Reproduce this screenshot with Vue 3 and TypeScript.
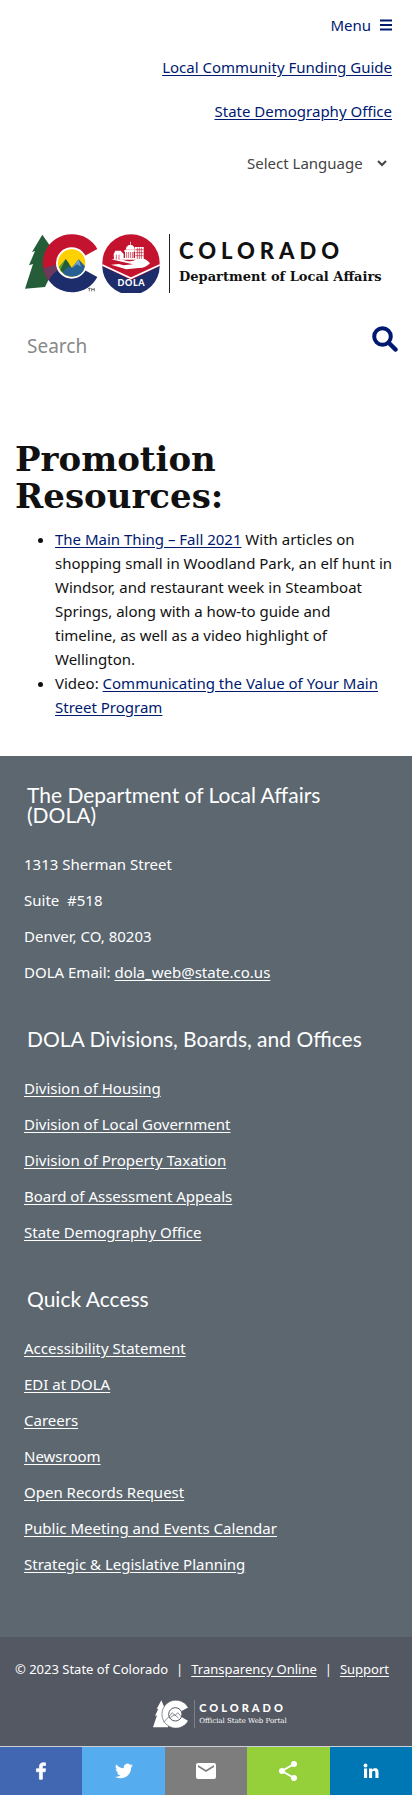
<script setup lang="ts">
interface LinkGroup {
  title: string
  links: string[]
}

const topLinks: string[] = ['Local Community Funding Guide', 'State Demography Office']

const groups: LinkGroup[] = [
  {
    title: 'DOLA Divisions, Boards, and Offices',
    links: [
      'Division of Housing',
      'Division of Local Government',
      'Division of Property Taxation',
      'Board of Assessment Appeals',
      'State Demography Office',
    ],
  },
  {
    title: 'Quick Access',
    links: [
      'Accessibility Statement',
      'EDI at DOLA',
      'Careers',
      'Newsroom',
      'Open Records Request',
      'Public Meeting and Events Calendar',
      'Strategic & Legislative Planning',
    ],
  },
]
</script>

<template>
  <div class="page">
    <header class="header">
      <button class="menu" type="button">
        Menu
        <svg width="12" height="12" viewBox="0 0 12 12" aria-hidden="true">
          <path d="M0 1.5h12M0 6h12M0 10.5h12" stroke="currentColor" stroke-width="2" />
        </svg>
      </button>
      <a v-for="link in topLinks" :key="link" class="top-link" href="#">{{ link }}</a>
      <div class="language">
        <select aria-label="Select Language">
          <option>Select Language</option>
        </select>
        <svg width="10" height="7" viewBox="0 0 10 7" aria-hidden="true">
          <path d="M1 1l4 4 4-4" fill="none" stroke="currentColor" stroke-width="2" />
        </svg>
      </div>
    </header>

    <a class="logo" href="#" aria-label="Colorado Department of Local Affairs">
      <svg class="logo-state" width="76" height="60" viewBox="42 40 228 180" aria-hidden="true">
        <path fill="#245d38" d="M97 45L66 97l9-3-18 43 12-4-24 74 60-5 30-62-14-60z" />
        <path fill="#c3132f" d="M185 44a86 86 0 0 0-69 138l69-52 77-42a86 86 0 0 0-77-44z" />
        <path fill="#6d3a5d" d="M116 182l69-52-44 4-40 12q3 20 15 36z" />
        <path fill="#1d2c6b" d="M116 182a86 86 0 0 0 146-10l-77-42q-50 16-69 52z" />
        <circle cx="185" cy="130" r="47" fill="#fff" />
        <circle cx="185" cy="130" r="41" fill="#ffd100" />
        <path fill="#6b9e35" d="M146 142l21-24 11 14-24 25z" />
        <path fill="#245d38" d="M151 151l16-33 25 36-25 13z" />
        <path fill="#276092" d="M157 158l20-19 7 7 22-27 19 21q-6 31-40 31-20-1-28-13z" />
        <path fill="#6fa0c8" d="M184 147l22-28 7 22-12-7z" />
        <path d="M234 206h8m-4 0v9m7 0v-9l4 5 4-5v9" fill="none" stroke="#333" stroke-width="2" />
      </svg>
      <svg class="logo-dola" width="58" height="60" viewBox="278 40 174 180">
        <circle cx="365" cy="130" r="86" fill="#c3132f" />
        <path fill="#1d2c6b" d="M279 139l86 42 86-42a86 86 0 0 1-172 0z" />
        <path d="M279 136l86 40 86-40" fill="none" stroke="#fff" stroke-width="5" />
        <g fill="#fff">
          <path d="M358 76h4V66h2v10h4q9 5 9 14h-28q0-9 9-14zM345 91h31v5h-3v19h4v5h-34v-5h4V96h-2zM377 82h26v38h-26zM313 103l5-10h16l9 10v17h-29z" />
          <path d="M305 119q28-4 45 4 18 6 32-5l14-2q12 0 26 15-14 15-34 14l-38 4q-23-8-45-14l24-2 14 4 28-3-34-8z" />
        </g>
        <path d="M352 97v18m6-18v18m6-18v18m6-18v18M384 84v34m6-34v34m6-34v34M378 90h24m-24 9h24m-24 9h24M321 105v15m8-15v15" stroke="#c3132f" stroke-width="2" />
        <text x="366" y="199" text-anchor="middle" class="dola-text">DOLA</text>
      </svg>
      <span class="wordmark">
        <span class="state-name">COLORADO</span>
        <span class="department">Department of Local Affairs</span>
      </span>
    </a>

    <form class="search" @submit.prevent>
      <input type="search" placeholder="Search" aria-label="Search" />
      <button type="submit" aria-label="Submit search">
        <svg width="26" height="26" viewBox="0 0 26 26" aria-hidden="true">
          <circle cx="10.5" cy="10.5" r="8.3" fill="none" stroke="currentColor" stroke-width="4" />
          <path d="M17 17l6.5 6.5" stroke="currentColor" stroke-width="4.5" stroke-linecap="round" />
        </svg>
      </button>
    </form>

    <main class="content">
      <h1>Promotion Resources:</h1>
      <ul>
        <li>
          <a href="#">The Main Thing – Fall 2021</a> With articles on shopping small in Woodland
          Park, an elf hunt in Windsor, and restaurant week in Steamboat Springs, along with a
          how-to guide and timeline, as well as a video highlight of Wellington.
        </li>
        <li>Video: <a href="#">Communicating the Value of Your Main Street Program</a></li>
      </ul>
    </main>

    <footer>
      <div class="footer-main">
        <section>
          <h2>The Department of Local Affairs (DOLA)</h2>
          <p>1313 Sherman Street</p>
          <p>Suite&nbsp; #518</p>
          <p>Denver, CO, 80203</p>
          <p>DOLA Email: <a href="#">dola_web@state.co.us</a></p>
        </section>
        <section v-for="group in groups" :key="group.title">
          <h2>{{ group.title }}</h2>
          <p v-for="link in group.links" :key="link">
            <a href="#">{{ link }}</a>
          </p>
        </section>
      </div>
      <div class="legal">
        <div class="legal-line">
          <span>© 2023 State of Colorado</span>
          <span>|</span>
          <a href="#">Transparency Online</a>
          <span>|</span>
          <a href="#">Support</a>
        </div>
        <a class="portal" href="#" aria-label="Colorado Official State Web Portal">
          <svg width="36" height="28" viewBox="0 0 108 84" aria-hidden="true">
            <path fill="#fff" d="M25 1L11 27l5-1L6 48l6-2L0 82h45L58 20 34 22z" />
            <path fill="#fff" stroke="#545862" stroke-width="2" d="M106 23A42 42 0 1 0 106 62L86 50V34z" />
            <circle cx="67" cy="43" r="20" fill="#fff" stroke="#545862" stroke-width="3" />
            <path d="M31 67l18-18 9-11 8 9 8-9 12 13M52 53l12-9 13 10" fill="none" stroke="#545862" stroke-width="2" />
          </svg>
          <span class="portal-text">
            <span class="portal-name">COLORADO</span>
            <span class="portal-sub">Official State Web Portal</span>
          </span>
        </a>
      </div>
    </footer>

    <nav class="share" aria-label="Share">
      <a class="facebook" href="#" aria-label="Facebook">
        <svg width="24" height="24" viewBox="0 0 32 32" aria-hidden="true">
          <path fill="#fff" d="M17.800 27V17h3.700l.6-4h-4.300v-2.400c0-1.200.4-1.900 2-1.900H22V5.200C21.600 5.100 20.300 5 18.900 5c-3 0-5 1.800-5 5.200V13h-4v4h4v10z" stroke="#fff" />
        </svg>
      </a>
      <a class="twitter" href="#" aria-label="Twitter">
        <svg width="24" height="24" viewBox="0 0 32 32" aria-hidden="true">
          <path fill="#fff" d="M28 8.600a9.900 9.900 0 0 1-2.800.8 4.900 4.900 0 0 0 2.100-2.700c-1 .6-2 1-3.100 1.200a4.900 4.900 0 0 0-8.400 4.500A14 14 0 0 1 5.700 7.200a4.900 4.900 0 0 0 1.500 6.600c-.8 0-1.600-.2-2.200-.6v.1c0 2.400 1.700 4.400 3.900 4.800a4.900 4.900 0 0 1-2.200.1 4.900 4.900 0 0 0 4.600 3.400A9.900 9.900 0 0 1 4 23.600a14 14 0 0 0 7.500 2.200c9.100 0 14-7.500 14-14v-.6A10 10 0 0 0 28 8.600z" />
        </svg>
      </a>
      <a class="email" href="#" aria-label="Email">
        <svg width="24" height="24" viewBox="0 0 24 24" aria-hidden="true">
          <path fill="#fff" d="M20 4H4a2 2 0 0 0-2 2v12a2 2 0 0 0 2 2h16a2 2 0 0 0 2-2V6a2 2 0 0 0-2-2zm0 4l-8 5-8-5V6l8 5 8-5z" />
        </svg>
      </a>
      <a class="sharethis" href="#" aria-label="Share this page">
        <svg width="24" height="24" viewBox="0 0 24 24" aria-hidden="true">
          <path d="M18 5L6 12l12 7" fill="none" stroke="#fff" stroke-width="2" />
          <g fill="#fff">
            <circle cx="18" cy="5" r="3" />
            <circle cx="6" cy="12" r="3" />
            <circle cx="18" cy="19" r="3" />
          </g>
        </svg>
      </a>
      <a class="linkedin" href="#" aria-label="LinkedIn">
        <svg width="24" height="24" viewBox="0 0 24 24" aria-hidden="true">
          <g fill="#fff">
            <circle cx="6.5" cy="6.500" r="1.900" />
            <path d="M5 9.500h3.100V19H5zM10 9.500h3v1.300c.5-.9 1.500-1.600 3-1.600 3 0 3.500 2 3.500 4.600V19h-3.100v-4.700c0-1.200 0-2.500-1.600-2.500s-1.700 1.200-1.700 2.400V19H10z" />
          </g>
        </svg>
      </a>
    </nav>
  </div>
</template>

<style>
body {
  margin: 0;
  background: #fff;
}
</style>

<style scoped>
.page {
  font-family: 'Trebuchet MS', 'Noto Sans', sans-serif;
  font-size: 15px;
  line-height: 24px;
  color: #111;
}

a {
  color: #001970;
  text-underline-offset: 2px;
}

button,
select,
input {
  font: inherit;
  border: 0;
  padding: 0;
  margin: 0;
  background: none;
}

.header {
  display: flex;
  flex-direction: column;
  align-items: flex-end;
  padding: 13px 20px 0;
}

.menu {
  display: flex;
  align-items: center;
  gap: 9px;
  margin-bottom: 18px;
  color: #001970;
}

.top-link {
  margin-bottom: 20px;
}

.language {
  display: flex;
  align-items: center;
  gap: 14px;
  margin-top: 8px;
  padding-right: 5px;
  color: #444;
}

.language select {
  appearance: none;
  color: inherit;
}

.logo {
  display: flex;
  align-items: flex-start;
  margin: 58px 20px 0 24px;
  color: #111;
  text-decoration: none;
}

.logo svg {
  flex: none;
}

.logo-dola {
  margin-left: 2px;
}

.dola-text {
  font-family: Lato, sans-serif;
  font-size: 27px;
  font-weight: 900;
  letter-spacing: 2px;
  fill: #fff;
}

.wordmark {
  display: flex;
  flex-direction: column;
  margin: 1px 0 0 9px;
  padding: 4px 0 3px 9px;
  border-left: 1px solid #222;
  white-space: nowrap;
}

.state-name {
  font-family: Lato, sans-serif;
  font-size: 22px;
  font-weight: 900;
  line-height: 26px;
  letter-spacing: 5px;
}

.department {
  font-family: 'Museo Slab', 'DejaVu Serif', serif;
  font-size: 13px;
  font-weight: 700;
  line-height: 26px;
}

.search {
  display: flex;
  align-items: flex-start;
  margin: 33px 14px 0 27px;
}

.search input {
  flex: 1;
  min-width: 0;
  margin-top: 8px;
  font-size: 19px;
  line-height: 24px;
  outline: none;
}

.search input::placeholder {
  color: #888;
}

.search button {
  display: flex;
  color: #001970;
}

.content {
  padding: 83px 15px 37px;
}

h1 {
  max-width: 300px;
  margin: 0 0 12px;
  font-family: 'Museo Slab', 'DejaVu Serif', serif;
  font-size: 34px;
  font-weight: 700;
  line-height: 37px;
}

ul {
  margin: 0;
  padding: 0 4px 0 40px;
}

.footer-main {
  padding: 29px 24px 49px;
  background: #5c6770;
  color: #fff;
}

footer a {
  color: #fff;
}

h2 {
  margin: 0 3px 27px;
  font-family: 'Museo Sans', Lato, sans-serif;
  font-size: 21px;
  font-weight: 400;
  line-height: 20px;
}

section + section {
  margin-top: 45px;
}

p {
  margin: 0 0 12px;
}

.legal {
  display: flex;
  flex-direction: column;
  align-items: center;
  padding: 20px 16px 18px 8px;
  background: #545862;
  color: #fff;
}

.legal-line {
  display: flex;
  gap: 8px;
  font-size: 13px;
  white-space: nowrap;
}

.portal {
  display: flex;
  gap: 5px;
  margin: 19px 0 0 36px;
  text-decoration: none;
}

.portal-text {
  display: flex;
  flex-direction: column;
  padding-left: 4px;
  border-left: 1px solid #7c808a;
}

.portal-name {
  font-family: Lato, sans-serif;
  font-size: 11px;
  font-weight: 900;
  line-height: 16px;
  letter-spacing: 3px;
}

.portal-sub {
  font-family: 'Museo Slab', 'DejaVu Serif', serif;
  font-size: 7px;
  line-height: 10px;
}

.share {
  display: flex;
  border-top: 1px solid #ccd0d6;
}

.share a {
  display: flex;
  flex: 1;
  align-items: center;
  justify-content: center;
  height: 48px;
}

.facebook {
  background: #4267b2;
}

.twitter {
  background: #55acee;
}

.email {
  background: #7d7d7d;
}

.sharethis {
  background: #95d03a;
}

.linkedin {
  background: #0077b5;
}
</style>
